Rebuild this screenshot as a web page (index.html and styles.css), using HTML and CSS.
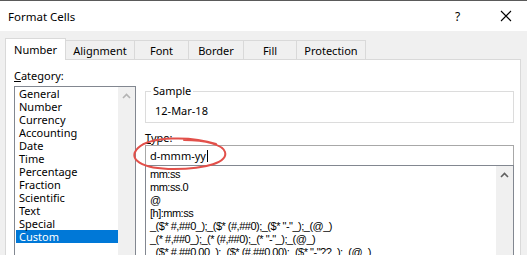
FILE: index.html
```html
<!DOCTYPE html>
<html lang="en">
<head>
<meta charset="UTF-8">
<title>Format Cells</title>
<link rel="stylesheet" href="styles.css">
</head>
<body>
<div class="window">
  <div class="titlebar">
    <span class="title">Format Cells</span>
    <span class="help">?</span>
    <svg class="close" width="12" height="12" viewBox="0 0 12 12">
      <path d="M1 1L11 11M11 1L1 11" stroke="#000" stroke-width="1.1" fill="none"/>
    </svg>
  </div>

  <div class="dialog">
    <div class="tabs">
      <div class="tab active" style="width:61px">Number</div>
      <div class="tab" style="width:70px">Alignment</div>
      <div class="tab" style="width:55px">Font</div>
      <div class="tab" style="width:56px">Border</div>
      <div class="tab" style="width:54px">Fill</div>
      <div class="tab" style="width:70px">Protection</div>
    </div>

    <div class="panel">
      <div class="category">
        <div class="label"><u>C</u>ategory:</div>
        <div class="listbox">
          <ul class="cat-items">
            <li>General</li>
            <li>Number</li>
            <li>Currency</li>
            <li>Accounting</li>
            <li>Date</li>
            <li>Time</li>
            <li>Percentage</li>
            <li>Fraction</li>
            <li>Scientific</li>
            <li>Text</li>
            <li>Special</li>
            <li class="selected">Custom</li>
          </ul>
          <div class="scrollbar light">
            <svg width="9" height="6" viewBox="0 0 9 6"><path d="M1 5L4.5 1.5L8 5" stroke="#b4b4b4" stroke-width="1.6" fill="none"/></svg>
          </div>
        </div>
      </div>

      <div class="format">
        <div class="sample">
          <span class="legend">Sample</span>
          <div class="sample-value">12-Mar-18</div>
        </div>

        <div class="label type-label"><u>T</u>ype:</div>
        <div class="type-input">d-mmm-yy<span class="caret"></span></div>
        <div class="type-list">
          <ul class="codes">
            <li>mm:ss</li>
            <li>mm:ss.0</li>
            <li>@</li>
            <li>[h]:mm:ss</li>
            <li>_($* #,##0_);_($* (#,##0);_($* "-"_);_(@_)</li>
            <li>_(* #,##0_);_(* (#,##0);_(* "-"_);_(@_)</li>
            <li>_($* #,##0.00_);_($* (#,##0.00);_($* "-"??_);_(@_)</li>
          </ul>
          <div class="scrollbar">
            <svg width="9" height="6" viewBox="0 0 9 6"><path d="M1 5L4.5 1.5L8 5" stroke="#606060" stroke-width="1.6" fill="none"/></svg>
          </div>
        </div>
      </div>
    </div>
  </div>

  <svg class="mark" width="527" height="255" viewBox="0 0 527 255">
    <path d="M216 144 C192 136 150 136 138 148 C127 159 141 169 174 169 C207 169 228 162 225 152 C223 145 206 140 184 140"
          stroke="#e2504a" stroke-width="2" fill="none" stroke-linecap="round"/>
  </svg>
</div>
</body>
</html>
```

FILE: styles.css
```css
body {
  margin: 0;
  font-family: "Noto Sans", Arial, sans-serif;
  font-size: 11px;
  color: #000;
}

.window {
  position: relative;
  width: 527px;
  height: 255px;
  overflow: hidden;
  background-color: #f0f0f0;
}

.titlebar {
  height: 30px;
  border-top: 1px solid #5a5a5a;
  background-color: #fff;
  display: flex;
  align-items: center;
  padding-left: 8px;
  font-size: 11.5px;
}

.title {
  flex: 1;
}

.help {
  width: 12px;
  margin-right: 33px;
  font-size: 12px;
}

.close {
  margin-right: 15px;
}

.dialog {
  padding: 7px 6px 0 5px;
}

.tabs {
  display: flex;
  align-items: flex-end;
  height: 21px;
}

.tab {
  box-sizing: border-box;
  height: 19px;
  margin-left: -1px;
  border: 1px solid #d9d9d9;
  border-bottom: none;
  text-align: center;
  line-height: 19px;
}

.tab.active {
  position: relative;
  z-index: 1;
  height: 22px;
  margin-left: 0;
  margin-bottom: -1px;
  background-color: #fff;
  line-height: 22px;
}

.panel {
  height: 200px;
  border: 1px solid #d9d9d9;
  background-color: #fff;
  display: flex;
  padding: 9px 0 0 8px;
}

.label {
  line-height: 14px;
  height: 14px;
  margin-bottom: 3px;
}

.category {
  width: 122px;
}

.listbox {
  box-sizing: border-box;
  width: 122px;
  height: 180px;
  border: 1px solid #828790;
  display: flex;
}

.cat-items {
  list-style: none;
  margin: 0;
  padding: 0 0 0 1px;
  flex: 1;
}

.cat-items li {
  height: 13px;
  line-height: 13px;
  padding-left: 3px;
}

.cat-items li.selected {
  background-color: #0078d7;
  color: #fff;
}

.scrollbar {
  width: 17px;
  background-color: #f0f0f0;
  display: flex;
  justify-content: center;
  align-items: flex-start;
  padding-top: 6px;
}

.format {
  width: 369px;
  margin-left: 9px;
}

.sample {
  position: relative;
  box-sizing: border-box;
  height: 32px;
  margin-top: 22px;
  border: 1px solid #dcdcdc;
  padding: 12px 0 0 9px;
}

.legend {
  position: absolute;
  left: 5px;
  top: -8px;
  padding: 0 2px;
  background-color: #fff;
  line-height: 14px;
}

.sample-value {
  line-height: 14px;
}

.type-label {
  margin-top: 8px;
  margin-bottom: 0;
}

.type-input {
  box-sizing: border-box;
  height: 20px;
  border: 1px solid #a8a8a8;
  border-bottom: none;
  padding-left: 4px;
  display: flex;
  align-items: center;
}

.caret {
  width: 1px;
  height: 12px;
  background-color: #000;
  margin-left: 1px;
}

.type-list {
  box-sizing: border-box;
  height: 100px;
  border: 1px solid #828790;
  display: flex;
}

.codes {
  list-style: none;
  margin: 0;
  padding: 2px 0 0 4px;
  flex: 1;
  font-family: "Liberation Sans", Arial, sans-serif;
  font-size: 11px;
  letter-spacing: -0.5px;
}

.codes li {
  height: 13px;
  line-height: 13px;
  white-space: nowrap;
}

.mark {
  position: absolute;
  left: 0;
  top: 0;
  pointer-events: none;
}
```
